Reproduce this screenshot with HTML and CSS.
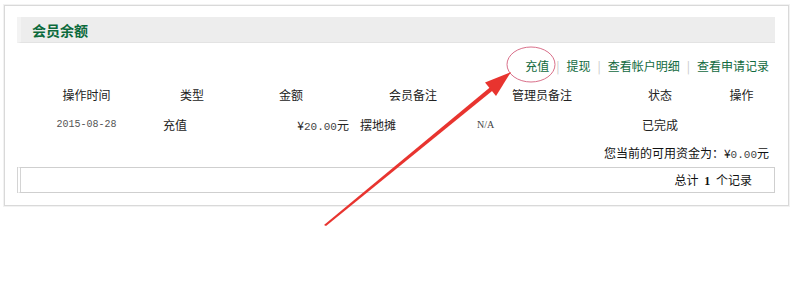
FILE: index.html
```html
<!DOCTYPE html>
<html lang="zh-CN">
<head>
<meta charset="utf-8">
<title>会员余额</title>
<link rel="stylesheet" href="styles.css">
</head>
<body>
<div class="panel">
  <div class="panel-head"><span class="panel-title">会员余额</span></div>
  <div class="links">
    <a class="link">充值</a><span class="sep">|</span><a class="link">提现</a><span class="sep">|</span><a class="link">查看帐户明细</a><span class="sep">|</span><a class="link">查看申请记录</a>
  </div>
  <table class="records">
    <colgroup>
      <col class="c1"><col class="c2"><col class="c3"><col class="c4"><col class="c5"><col class="c6"><col class="c7">
    </colgroup>
    <thead>
      <tr><th>操作时间</th><th>类型</th><th>金额</th><th>会员备注</th><th>管理员备注</th><th>状态</th><th>操作</th></tr>
    </thead>
    <tbody>
      <tr>
        <td class="date">2015-08-28</td>
        <td class="type">充值</td>
        <td class="amount">¥<span class="num">20.00</span>元</td>
        <td class="note">摆地摊</td>
        <td class="admin">N/A</td>
        <td class="status">已完成</td>
        <td></td>
      </tr>
    </tbody>
  </table>
  <div class="balance">您当前的可用资金为：¥<span class="num">0.00</span>元</div>
  <div class="pager">总计 <b>1</b> 个记录</div>
</div>
<svg class="overlay" width="796" height="288" viewBox="0 0 796 288">
  <ellipse cx="531" cy="64.5" rx="24" ry="17.5" fill="none" stroke="#d9708a" stroke-width="1"/>
  <polygon points="324,225 326,226 497,87 494,84" fill="#e8342f"/>
  <polygon points="511,72 485,82.5 496,96" fill="#e8342f"/>
</svg>
</body>
</html>
```
FILE: styles.css
```css
html, body {
  margin: 0;
  padding: 0;
  background: #ffffff;
}
body {
  padding: 5px 0 0 4px;
  font-family: "Noto Sans CJK SC", "Noto Sans", sans-serif;
  font-size: 12px;
  color: #222;
  position: relative;
  width: 796px;
  height: 288px;
  box-sizing: border-box;
}
.panel {
  width: 785px;
  box-sizing: border-box;
  border: 1px solid #d9d9d9;
  box-shadow: 0 0 0 1px #f2f2f2;
  padding: 11px 13px 12px 12px;
}
.panel-head {
  height: 26px;
  background: #ededed;
  border-left: 4px solid #f3f3f3;
  border-bottom: 1px solid #e3e3e3;
  box-sizing: border-box;
  display: flex;
  align-items: center;
  padding-left: 11px;
}
.panel-title {
  font-size: 14px;
  font-weight: bold;
  color: #0b6a3c;
  line-height: 26px;
}
.links {
  margin-top: 13px;
  height: 20px;
  line-height: 20px;
  text-align: right;
  padding-right: 6px;
}
.link {
  color: #126a40;
  font-size: 12px;
}
.sep {
  color: #c8c8c8;
  margin: 0 7px;
}
.records {
  margin-top: 3px;
  width: 100%;
  border-collapse: collapse;
  table-layout: fixed;
}
.c1 { width: 139px; }
.c2 { width: 72px; }
.c3 { width: 126px; }
.c4 { width: 118px; }
.c5 { width: 140px; }
.c6 { width: 96px; }
.c7 { width: 67px; }
.records th {
  font-weight: normal;
  color: #222;
  height: 30px;
  padding: 0;
  text-align: center;
}
.records td {
  height: 30px;
  padding: 0;
}
.date {
  text-align: center;
  font-family: "Liberation Mono", monospace;
  font-size: 10px;
  color: #555;
}
.type {
  padding-left: 7px !important;
}
.amount {
  text-align: right;
  padding-right: 5px !important;
}
.num {
  font-family: "Liberation Mono", monospace;
  font-size: 11px;
  color: #444;
}
.note {
  padding-left: 6px !important;
}
.admin {
  padding-left: 5px !important;
  font-family: "Liberation Serif", serif;
  font-size: 10px;
  color: #444;
}
.status {
  text-align: center;
}
.balance {
  margin-top: 4px;
  height: 20px;
  line-height: 20px;
  text-align: right;
  padding-right: 6px;
  color: #111;
}
.pager {
  margin-top: 4px;
  height: 26px;
  box-sizing: border-box;
  border: 1px solid #cfcfcf;
  border-left: 4px double #d4d4d4;
  line-height: 24px;
  text-align: right;
  padding-right: 22px;
  color: #111;
}
.pager b {
  font-family: "Liberation Serif", serif;
  margin: 0 3px;
}
.overlay {
  position: absolute;
  left: 0;
  top: 0;
  pointer-events: none;
}
```
